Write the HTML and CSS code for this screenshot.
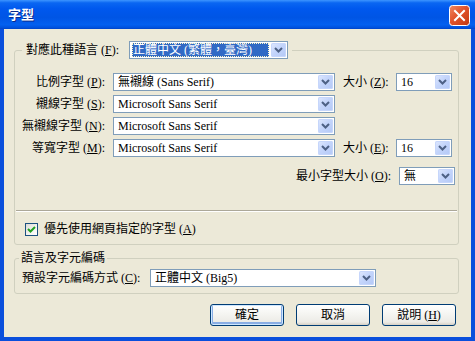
FILE: index.html
```html
<!DOCTYPE html>
<html lang="zh-Hant">
<head>
    <meta charset="UTF-8">
    <title>字型</title>
    <link rel="stylesheet" href="styles.css">
</head>
<body>
    <div class="window">
        <div class="titlebar">
            <span class="title">字型</span>
            <button class="close-btn" aria-label="關閉">
                <svg width="21" height="21" viewBox="0 0 21 21">
                    <defs>
                        <linearGradient id="closeGrad" x1="0" y1="0" x2="1" y2="1">
                            <stop offset="0" stop-color="#f08a64"/>
                            <stop offset="0.45" stop-color="#e1532c"/>
                            <stop offset="1" stop-color="#c2380f"/>
                        </linearGradient>
                    </defs>
                    <rect x="0.5" y="0.5" width="20" height="20" rx="3" fill="url(#closeGrad)" stroke="#fff"/>
                    <path d="M6 6 L15 15 M15 6 L6 15" stroke="#fff" stroke-width="2" stroke-linecap="square"/>
                </svg>
            </button>
        </div>

        <div class="client">
            <fieldset class="group group-fonts">
                <legend class="legend-lang">
                    <span class="label">對應此種語言 (<u>F</u>):</span>
                    <div class="combo combo-lang">
                        <span class="combo-text"><span class="selected">正體中文 (繁體，臺灣)</span></span>
                        <span class="combo-btn"><svg width="15" height="14" viewBox="0 0 15 14"><path d="M4 5 L7.5 8.5 L11 5" fill="none" stroke="#4d6185" stroke-width="2"/></svg></span>
                    </div>
                </legend>

                <div class="font-grid">
                    <span class="label right">比例字型 (<u>P</u>):</span>
                    <div class="combo"><span class="combo-text">無襯線 (Sans Serif)</span><span class="combo-btn"><svg width="15" height="14" viewBox="0 0 15 14"><path d="M4 5 L7.5 8.5 L11 5" fill="none" stroke="#4d6185" stroke-width="2"/></svg></span></div>
                    <span class="label">大小 (<u>Z</u>):</span>
                    <div class="combo"><span class="combo-text">16</span><span class="combo-btn"><svg width="15" height="14" viewBox="0 0 15 14"><path d="M4 5 L7.5 8.5 L11 5" fill="none" stroke="#4d6185" stroke-width="2"/></svg></span></div>

                    <span class="label right">襯線字型 (<u>S</u>):</span>
                    <div class="combo"><span class="combo-text">Microsoft Sans Serif</span><span class="combo-btn"><svg width="15" height="14" viewBox="0 0 15 14"><path d="M4 5 L7.5 8.5 L11 5" fill="none" stroke="#4d6185" stroke-width="2"/></svg></span></div>
                    <span></span>
                    <span></span>

                    <span class="label right">無襯線字型 (<u>N</u>):</span>
                    <div class="combo"><span class="combo-text">Microsoft Sans Serif</span><span class="combo-btn"><svg width="15" height="14" viewBox="0 0 15 14"><path d="M4 5 L7.5 8.5 L11 5" fill="none" stroke="#4d6185" stroke-width="2"/></svg></span></div>
                    <span></span>
                    <span></span>

                    <span class="label right">等寬字型 (<u>M</u>):</span>
                    <div class="combo"><span class="combo-text">Microsoft Sans Serif</span><span class="combo-btn"><svg width="15" height="14" viewBox="0 0 15 14"><path d="M4 5 L7.5 8.5 L11 5" fill="none" stroke="#4d6185" stroke-width="2"/></svg></span></div>
                    <span class="label">大小 (<u>E</u>):</span>
                    <div class="combo"><span class="combo-text">16</span><span class="combo-btn"><svg width="15" height="14" viewBox="0 0 15 14"><path d="M4 5 L7.5 8.5 L11 5" fill="none" stroke="#4d6185" stroke-width="2"/></svg></span></div>
                </div>

                <div class="min-row">
                    <span class="label">最小字型大小 (<u>O</u>):</span>
                    <div class="combo combo-size"><span class="combo-text">無</span><span class="combo-btn"><svg width="15" height="14" viewBox="0 0 15 14"><path d="M4 5 L7.5 8.5 L11 5" fill="none" stroke="#4d6185" stroke-width="2"/></svg></span></div>
                </div>

                <div class="separator"></div>

                <div class="check-row">
                    <span class="checkbox">
                        <svg width="11" height="11" viewBox="0 0 11 11"><path d="M2 5 L4.5 7.5 L9 3" fill="none" stroke="#21a121" stroke-width="2"/></svg>
                    </span>
                    <span class="label">優先使用網頁指定的字型 (<u>A</u>)</span>
                </div>
            </fieldset>

            <fieldset class="group group-enc">
                <legend class="legend-enc">語言及字元編碼</legend>
                <div class="enc-row">
                    <span class="label enc-label">預設字元編碼方式 (<u>C</u>):</span>
                    <div class="combo combo-enc"><span class="combo-text">正體中文 (Big5)</span><span class="combo-btn"><svg width="15" height="14" viewBox="0 0 15 14"><path d="M4 5 L7.5 8.5 L11 5" fill="none" stroke="#4d6185" stroke-width="2"/></svg></span></div>
                </div>
            </fieldset>

            <div class="buttons">
                <button class="btn btn-default">確定</button>
                <button class="btn">取消</button>
                <button class="btn">說明 (<u>H</u>)</button>
            </div>
        </div>
    </div>
</body>
</html>
```

FILE: styles.css
```css
body {
    margin: 0;
    width: 475px;
    height: 341px;
    overflow: hidden;
    font-family: "Liberation Serif", "Noto Sans CJK TC", serif;
    font-size: 12px;
    color: #000;
}

.window {
    width: 475px;
    height: 341px;
    box-sizing: border-box;
    background: #0a4fdc;
    display: flex;
    flex-direction: column;
}

.titlebar {
    height: 29px;
    flex: none;
    display: flex;
    align-items: center;
    justify-content: space-between;
    padding: 0 5px 0 8px;
    background: linear-gradient(to bottom, #3d95ff 0%, #0a66f2 10%, #0058ee 30%, #0055e5 60%, #0360f0 85%, #0052de 95%, #0043c8 100%);
}

.title {
    font-family: "Noto Sans CJK TC", sans-serif;
    font-weight: bold;
    font-size: 13px;
    line-height: 14px;
    color: #fff;
    text-shadow: 1px 1px 0 #0a2a8c;
    margin-top: -1px;
}

.close-btn {
    width: 21px;
    height: 21px;
    padding: 0;
    border: none;
    background: none;
    display: block;
    margin-top: 1px;
}

.close-btn svg {
    display: block;
}

.client {
    flex: 1;
    margin: 0 4px 4px 4px;
    background: #ece9d8;
    display: flex;
    flex-direction: column;
}

.label {
    white-space: nowrap;
    line-height: 14px;
}

.label.right {
    text-align: right;
}

.group {
    width: 445px;
    box-sizing: border-box;
    margin: 0 0 0 10px;
    border: 1px solid #d0d0bf;
    border-radius: 3px;
    padding: 0;
    min-width: 0;
}

.group-fonts {
    margin-top: 12px;
    padding: 14px 0 8px 0;
}

.legend-lang {
    display: flex;
    align-items: center;
    gap: 10px;
    margin-left: 7px;
    padding: 0 4px;
    height: 18px;
}

/* combo box */
.combo {
    display: flex;
    align-items: center;
    height: 18px;
    box-sizing: border-box;
    border: 1px solid #7f9db9;
    background: #fff;
    padding: 1px;
}

.combo-text {
    flex: 1;
    padding-left: 3px;
    line-height: 14px;
    white-space: nowrap;
    overflow: hidden;
}

.combo-btn {
    width: 15px;
    height: 14px;
    flex: none;
    border-radius: 2px;
    background: linear-gradient(135deg, #e0e9fe 0%, #c4d5fb 45%, #b3c8f6 100%);
    box-shadow: inset 0 0 0 1px #c6d6fb;
}

.combo-btn svg {
    display: block;
}

.combo-lang {
    width: 159px;
}

.combo-lang .combo-text {
    padding-left: 1px;
}

.selected {
    display: inline-block;
    width: 136px;
    background: #316ac5;
    color: #fff;
    outline: 1px dotted #fff8c8;
    outline-offset: -1px;
    padding-left: 1px;
}

.font-grid {
    display: grid;
    grid-template-columns: 88px 222px 45px 56px;
    grid-auto-rows: 18px;
    column-gap: 8px;
    row-gap: 4px;
    align-items: center;
    margin-left: 2px;
}

.min-row {
    display: flex;
    justify-content: flex-end;
    align-items: center;
    gap: 8px;
    margin-top: 10px;
    padding-right: 3px;
}

.combo-size {
    width: 56px;
}

.separator {
    margin: 25px 1px 0 1px;
    border-top: 1px solid #aca899;
    border-bottom: 1px solid #fff;
}

.check-row {
    display: flex;
    align-items: center;
    gap: 6px;
    margin: 10px 0 0 10px;
}

.checkbox {
    width: 13px;
    height: 13px;
    box-sizing: border-box;
    border: 1px solid #1c5180;
    background: linear-gradient(135deg, #dcdcd7 0%, #f4f4f0 60%, #fff 100%);
    display: flex;
    align-items: center;
    justify-content: center;
}

.checkbox svg {
    display: block;
}

.group-enc {
    margin-top: 6px;
    padding: 4px 0 6px 0;
}

.legend-enc {
    margin-left: 4px;
    padding: 0 2px;
    line-height: 14px;
    height: 14px;
}

.enc-row {
    display: flex;
    align-items: center;
    gap: 8px;
    margin-left: 7px;
}

.enc-label {
    width: 120px;
}

.combo-enc {
    width: 226px;
}

.buttons {
    display: flex;
    justify-content: flex-end;
    gap: 12px;
    margin-top: 10px;
    padding-right: 15px;
}

.btn {
    width: 74px;
    height: 22px;
    box-sizing: border-box;
    border: 1px solid #003c74;
    border-radius: 3px;
    background: linear-gradient(to bottom, #ffffff 0%, #f6f6f3 40%, #ecebe6 85%, #d6d0c5 100%);
    font-family: "Liberation Serif", "Noto Sans CJK TC", serif;
    font-size: 12px;
    line-height: 14px;
    color: #000;
    padding: 0;
}

.btn-default {
    box-shadow: inset 0 0 0 1px #cee7ff, inset 0 -1px 0 2px #89ade4;
}
```
